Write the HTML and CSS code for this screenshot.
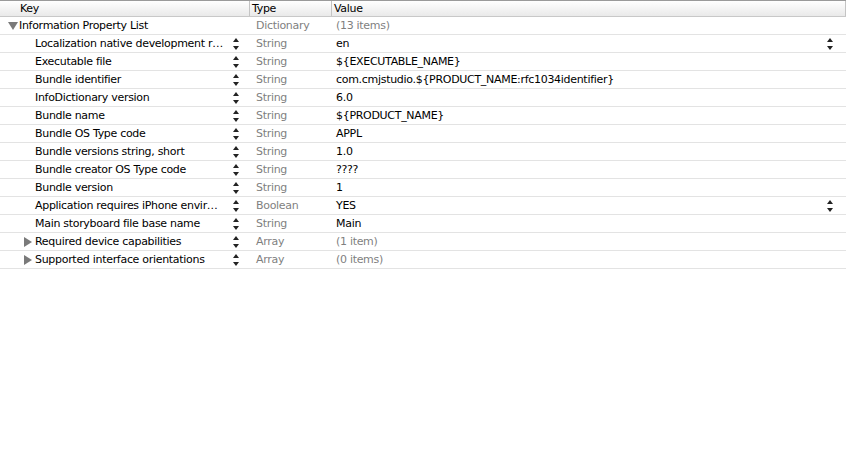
FILE: index.html
```html
<!DOCTYPE html>
<html lang="en">
<head>
    <meta charset="UTF-8">
    <title>Info.plist</title>
    <link rel="stylesheet" href="styles.css">
</head>
<body>
    <div class="plist">
        <div class="header">
            <div class="col key">Key</div>
            <div class="col type">Type</div>
            <div class="col value">Value</div>
        </div>

        <div class="row root">
            <div class="key"><span class="tri open"></span>Information Property List</div>
            <div class="type">Dictionary</div>
            <div class="value dim">(13 items)</div>
        </div>
        <div class="row">
            <div class="key child">Localization native development r…</div><span class="step"></span>
            <div class="type">String</div>
            <div class="value">en</div><span class="step right"></span>
        </div>
        <div class="row">
            <div class="key child">Executable file</div><span class="step"></span>
            <div class="type">String</div>
            <div class="value">${EXECUTABLE_NAME}</div>
        </div>
        <div class="row">
            <div class="key child">Bundle identifier</div><span class="step"></span>
            <div class="type">String</div>
            <div class="value">com.cmjstudio.${PRODUCT_NAME:rfc1034identifier}</div>
        </div>
        <div class="row">
            <div class="key child">InfoDictionary version</div><span class="step"></span>
            <div class="type">String</div>
            <div class="value">6.0</div>
        </div>
        <div class="row">
            <div class="key child">Bundle name</div><span class="step"></span>
            <div class="type">String</div>
            <div class="value">${PRODUCT_NAME}</div>
        </div>
        <div class="row">
            <div class="key child">Bundle OS Type code</div><span class="step"></span>
            <div class="type">String</div>
            <div class="value">APPL</div>
        </div>
        <div class="row">
            <div class="key child">Bundle versions string, short</div><span class="step"></span>
            <div class="type">String</div>
            <div class="value">1.0</div>
        </div>
        <div class="row">
            <div class="key child">Bundle creator OS Type code</div><span class="step"></span>
            <div class="type">String</div>
            <div class="value">????</div>
        </div>
        <div class="row">
            <div class="key child">Bundle version</div><span class="step"></span>
            <div class="type">String</div>
            <div class="value">1</div>
        </div>
        <div class="row">
            <div class="key child">Application requires iPhone envir…</div><span class="step"></span>
            <div class="type">Boolean</div>
            <div class="value">YES</div><span class="step right"></span>
        </div>
        <div class="row">
            <div class="key child">Main storyboard file base name</div><span class="step"></span>
            <div class="type">String</div>
            <div class="value">Main</div>
        </div>
        <div class="row">
            <div class="key child"><span class="tri"></span>Required device capabilities</div><span class="step"></span>
            <div class="type">Array</div>
            <div class="value dim">(1 item)</div>
        </div>
        <div class="row">
            <div class="key child"><span class="tri"></span>Supported interface orientations</div><span class="step"></span>
            <div class="type">Array</div>
            <div class="value dim">(0 items)</div>
        </div>
    </div>
</body>
</html>
```

FILE: styles.css
```css
body {
    margin: 0;
    background: #fff;
    font-family: "DejaVu Sans", "Liberation Sans", sans-serif;
    font-size: 11px;
    letter-spacing: -0.3px;
    color: #000;
}
.plist {
    width: 846px;
}
.header {
    display: flex;
    height: 15px;
    border-top: 1px solid #9a9a9a;
    border-bottom: 1px solid #c8c8c8;
    background: linear-gradient(#ffffff, #e9e9e9);
    line-height: 15px;
}
.header .col {
    box-sizing: border-box;
    border-right: 1px solid #c4c4c4;
}
.header .key {
    width: 250px;
    padding-left: 20px;
}
.header .type {
    width: 82px;
    padding-left: 2px;
}
.header .value {
    flex: 1;
    padding-left: 2px;
}
.row {
    position: relative;
    display: flex;
    height: 17px;
    line-height: 17px;
    border-bottom: 1px solid #e3e3e3;
}
.row .key {
    width: 256px;
    box-sizing: border-box;
    padding-left: 19px;
    white-space: nowrap;
    overflow: hidden;
}
.row .key.child {
    padding-left: 35px;
}
.row .type {
    width: 80px;
    color: #7f7f7f;
}
.row .value {
    flex: 1;
}
.row .dim {
    color: #7f7f7f;
}
.tri {
    position: absolute;
    width: 0;
    height: 0;
}
.root .tri.open {
    left: 8px;
    top: 5px;
    border-left: 5px solid transparent;
    border-right: 5px solid transparent;
    border-top: 8px solid #7a7a7a;
}
.child .tri {
    left: 24px;
    top: 4px;
    border-top: 5px solid transparent;
    border-bottom: 5px solid transparent;
    border-left: 8px solid #7a7a7a;
}
.step {
    position: absolute;
    left: 233px;
    top: 3px;
    width: 7px;
    height: 12px;
}
.step.right {
    left: 827px;
}
.step::before, .step::after {
    content: "";
    position: absolute;
    left: 0;
    border-left: 3.5px solid transparent;
    border-right: 3.5px solid transparent;
}
.step::before {
    top: 0;
    border-bottom: 4px solid #222;
}
.step::after {
    bottom: 0;
    border-top: 4px solid #222;
}
```
